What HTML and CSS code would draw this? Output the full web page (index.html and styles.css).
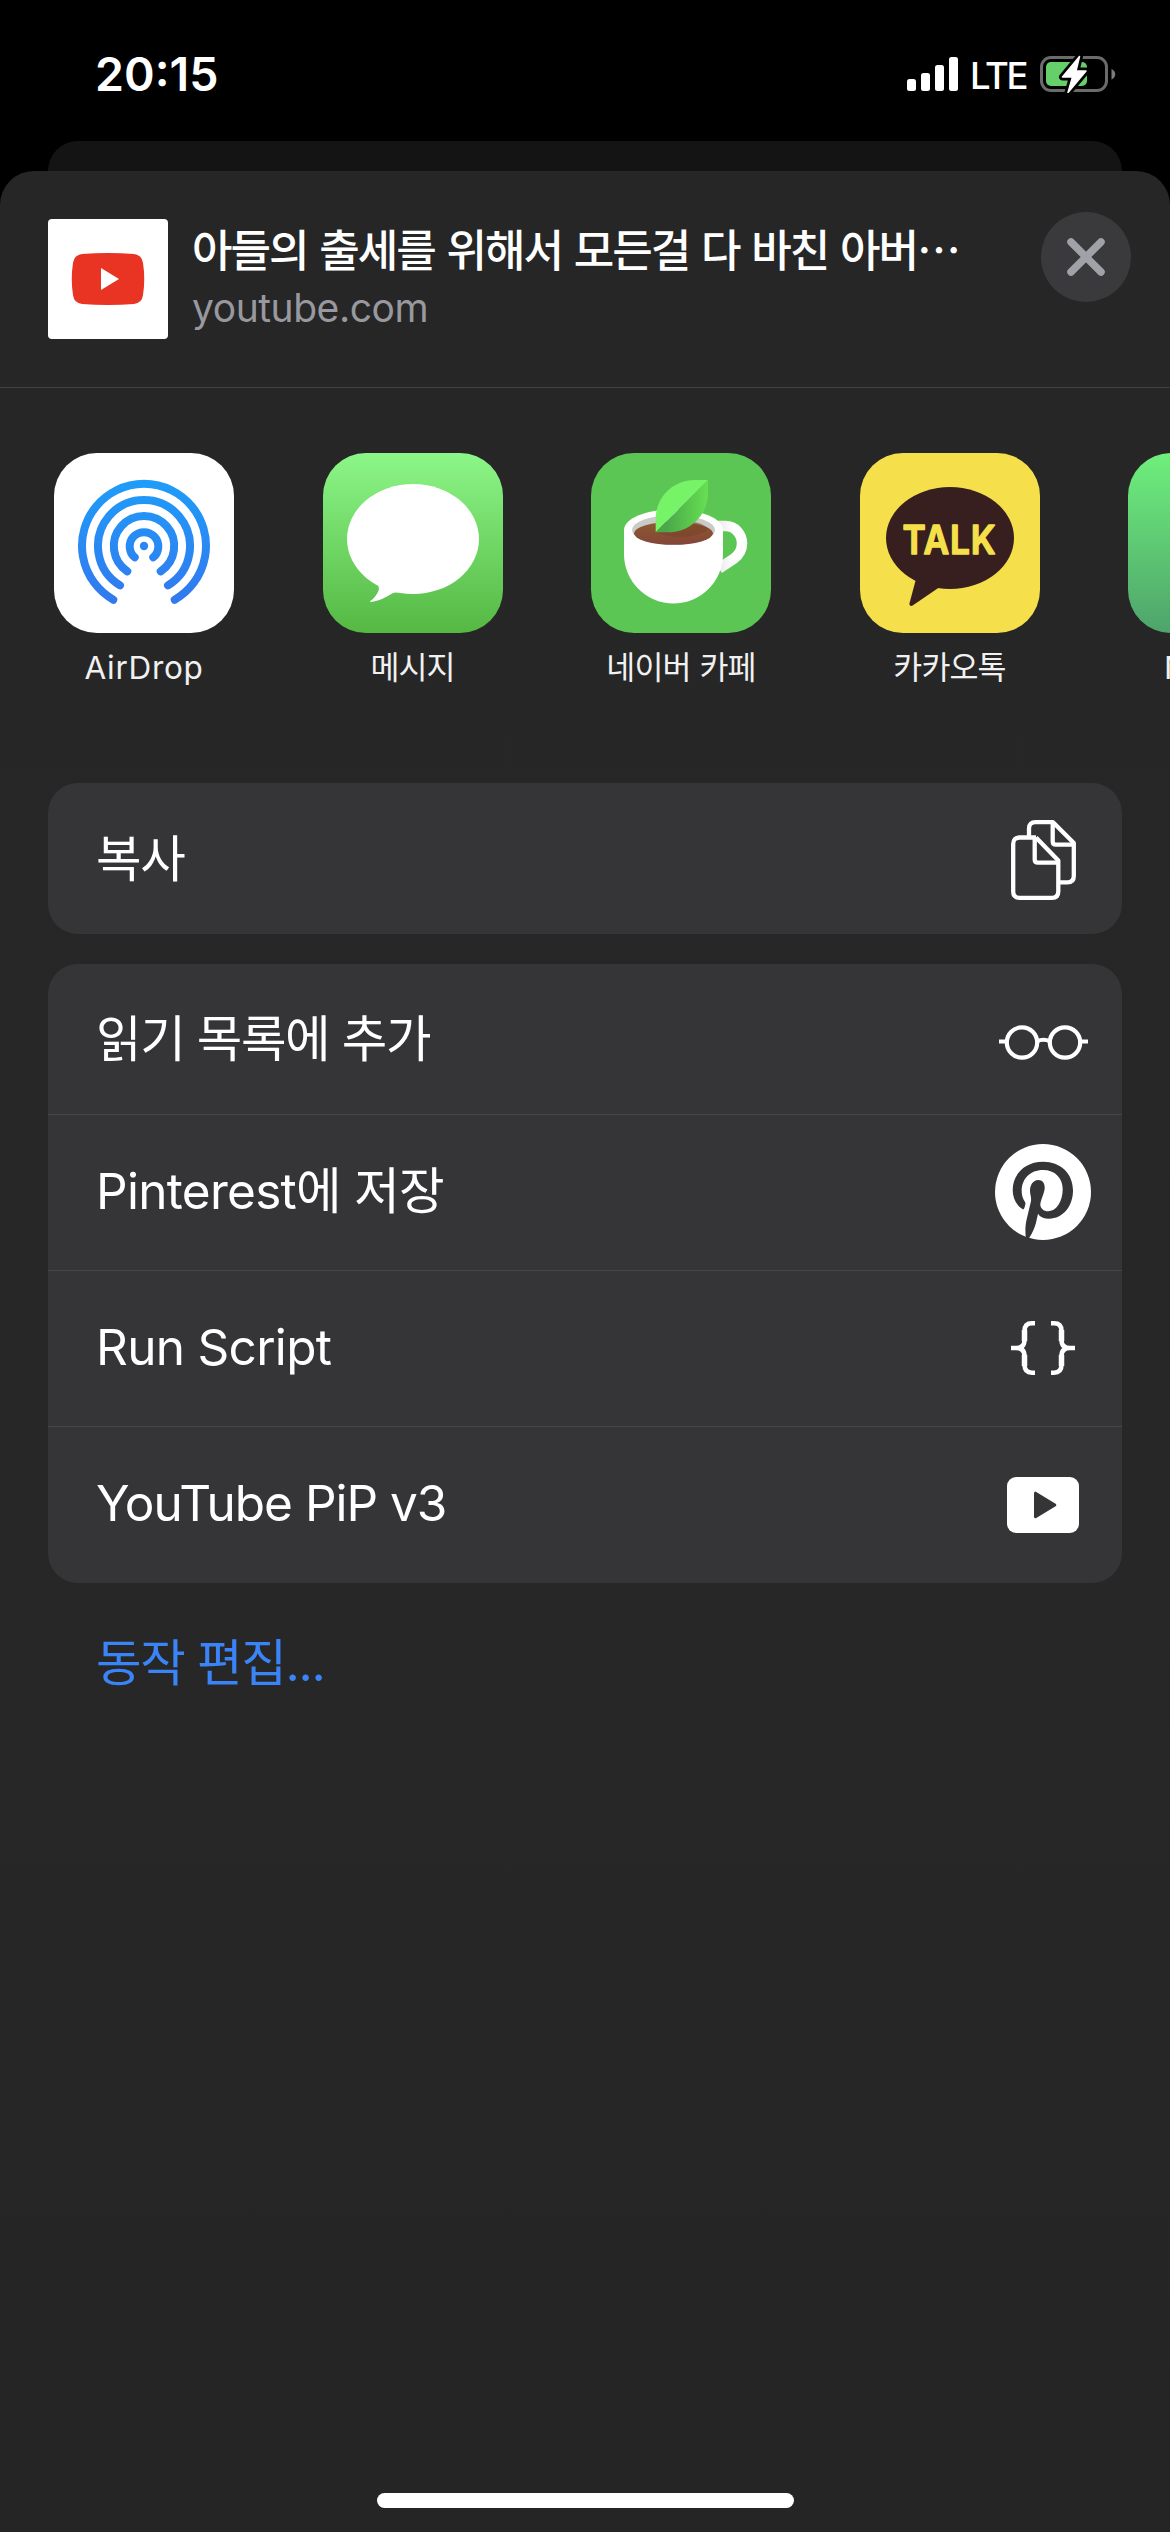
FILE: index.html
```html
<!DOCTYPE html>
<html lang="ko">
<head>
<meta charset="utf-8">
<title>공유</title>
<link rel="stylesheet" href="styles.css">
</head>
<body>
<div class="screen">
  <header class="status">
    <span class="time">20:15</span>
    <div class="status-right">
      <svg class="signal" width="51" height="34" viewBox="0 0 51 34" fill="#fff"><rect x="0" y="22" width="9" height="12" rx="2.5"/><rect x="14" y="16" width="9" height="18" rx="2.5"/><rect x="28" y="8" width="9" height="26" rx="2.5"/><rect x="42" y="0" width="9" height="34" rx="2.5"/></svg>
      <span class="network">LTE</span>
      <svg class="battery" width="76" height="38" viewBox="0 0 76 38"><rect x="1.5" y="2.5" width="65" height="33" rx="9.5" fill="none" stroke="#6b6b6b" stroke-width="3"/><rect x="6" y="7" width="41" height="24" rx="5" fill="#65d069"/><path d="M71.5 14c5 2 5 8.500 0 10.500z" fill="#7c7c7c"/><path d="M39.500 1.500L22.500 22h10L28 37.500 46 16H36z" fill="#fff" stroke="#000" stroke-width="7" stroke-linejoin="round"/><path d="M39.500 1.500L22.500 22h10L28 37.500 46 16H36z" fill="#fff" stroke="#fff" stroke-width="1.500" stroke-linejoin="round"/></svg>
    </div>
  </header>
  <div class="backcard"></div>
  <main class="sheet">
    <section class="preview">
      <svg class="thumb" width="120" height="120" viewBox="0 0 120 120"><rect width="120" height="120" rx="4" fill="#fff"/><path d="M34 35Q60 33 86 35Q94 36 95 44Q97.500 60 95 76Q94 84 86 85Q60 87 34 85Q26 84 25 76Q22.500 60 25 44Q26 36 34 35Z" fill="#e93323"/><path d="M53 49v22l18-11z" fill="#fff"/></svg>
      <div class="meta">
        <h1 class="title">아들의 출세를 위해서 모든걸 다 바친 아버⋯</h1>
        <p class="domain">youtube.com</p>
      </div>
      <button class="close" aria-label="닫기"><svg width="90" height="90" viewBox="0 0 90 90"><path d="M30 30l30 30M60 30L30 60" stroke="#a1a1a8" stroke-width="7.500" stroke-linecap="round"/></svg></button>
    </section>
    <section class="apps">
      <div class="app">
        <svg class="app-icon white" viewBox="0 0 180 180"><defs><linearGradient id="air" gradientUnits="userSpaceOnUse" x1="0" y1="27" x2="0" y2="150"><stop offset="0" stop-color="#1e9df9"/><stop offset="1" stop-color="#3378ee"/></linearGradient></defs><g fill="none" stroke="url(#air)" stroke-width="8" stroke-linecap="round"><path d="M59.300 146.700A62 62 0 1 1 120.700 146.700"/><path d="M66 132.300A46 46 0 1 1 114 132.300"/><path d="M73.300 118.300A30.200 30.200 0 1 1 106.700 118.300"/><path d="M80.700 104.300A14.300 14.300 0 1 1 99.300 104.300"/></g><circle cx="90" cy="93" r="4.200" fill="#2a88f2"/></svg>
        <span class="app-name">AirDrop</span>
      </div>
      <div class="app">
        <svg class="app-icon messages" viewBox="0 0 180 180"><ellipse cx="90" cy="86" rx="66" ry="55" fill="#fff"/><path d="M53 130Q59 135 52.500 143Q50 146.500 47 148.300Q47 149.500 51 148.500Q60 146.500 69 140.500Q71 139 76 139.500L80 125z" fill="#fff"/></svg>
        <span class="app-name ko">메시지</span>
      </div>
      <div class="app">
        <svg class="app-icon cafe" viewBox="0 0 180 180"><defs><linearGradient id="leaf" gradientUnits="userSpaceOnUse" x1="75" y1="0" x2="117" y2="0"><stop offset="0" stop-color="#4aa74a"/><stop offset="1" stop-color="#67e052"/></linearGradient><linearGradient id="coffee" x1="0" y1="0" x2="0" y2="1"><stop offset="0" stop-color="#8d5a2e"/><stop offset="1" stop-color="#84453a"/></linearGradient><linearGradient id="handle" gradientUnits="userSpaceOnUse" x1="129" y1="0" x2="143" y2="0"><stop offset="0" stop-color="#ececec"/><stop offset="1" stop-color="#fff"/></linearGradient></defs><path d="M127 73H134.500C144 73 151 81 151 90.500C151 98 148 102 142.500 106L128 115.500" fill="none" stroke="url(#handle)" stroke-width="10.500"/><path d="M33 77C33 65 56 56.500 82.500 56.500S132 65 132 77V101a49.500 49.500 0 0 1-99 0z" fill="#fff"/><ellipse cx="82.500" cy="77" rx="41.500" ry="15" fill="#cacaca"/><ellipse cx="82.500" cy="80.300" rx="39.500" ry="11.500" fill="url(#coffee)"/><path d="M64.700 79.300Q78 85 94 84Q111 82 118 76Q110 69 101 69L82 79z" fill="#7a4429" opacity=".6"/><path d="M64.700 79.300V66C64.700 44 82 27 104 27H117z" fill="#76f367"/><path d="M117 27V40C117 62 99 79.300 78 79.300H64.700z" fill="url(#leaf)"/></svg>
        <span class="app-name ko">네이버 카페</span>
      </div>
      <div class="app">
        <svg class="app-icon kakao" viewBox="0 0 180 180"><ellipse cx="90" cy="85" rx="64" ry="51" fill="#371f20"/><path d="M55.700 127L49.300 151Q50 154 53 152.300L79 134.500z" fill="#371f20"/><text class="talk" x="42.500" y="100.500" textLength="94" lengthAdjust="spacingAndGlyphs">TALK</text></svg>
        <span class="app-name ko">카카오톡</span>
      </div>
      <div class="app">
        <div class="app-icon partial"></div>
        <span class="app-name">NAVER</span>
      </div>
    </section>
    <section class="actions">
      <div class="group">
        <div class="row"><span class="label ko">복사</span>
          <div class="icon copy"><svg width="65" height="80" viewBox="0 0 65 80" fill="none" stroke="#fff" stroke-width="4.300" stroke-linejoin="round"><path d="M25 17.500H8.500Q2.200 17.500 2.200 24V71.500Q2.200 77.800 8.500 77.800H41Q47.300 77.800 47.300 71.500V40.500L25 17.500"/><path d="M23.700 18V39.500Q23.700 42.700 27 42.700H47"/><path d="M18 17V8.500Q18 2.200 24.500 2.200H42L62.800 23V56Q62.800 62.300 56.500 62.300H49"/><path d="M41.700 3V21.500Q41.700 24.700 45 24.700H62"/></svg></div></div>
      </div>
      <div class="group">
        <div class="row first"><span class="label ko">읽기 목록에 추가</span>
          <div class="icon glasses"><svg width="89" height="35" viewBox="0 0 89 35" fill="none" stroke="#fff" stroke-width="4.200"><circle cx="23" cy="17.500" r="15.200"/><circle cx="66" cy="17.500" r="15.200"/><path d="M38 16.500Q44.500 13 51 16.500M0 16.500H7M82 16.500H89"/></svg></div></div>
        <div class="row tall"><span class="label pinterest">Pinterest에 저장</span>
          <div class="icon"><svg width="96" height="96" viewBox="0 0 96 96"><circle cx="48" cy="48" r="48" fill="#fff"/><path d="M43.300 36C38 36 35 41 35 47C35 51 36.500 53 36 57L31.500 76C30 83 30.300 88 30.800 94L33.800 94.500C38 88 40 83 41 78.700L43 69.700C45 73 49 74.700 54 74.700C68 74.700 78 62 78 46.500C78 29 65 17.700 48.300 17.700C29 17.700 17.700 31 17.700 46C17.700 54 21.500 62 28 65.300C29.300 65.800 30 61.500 30.500 59.500C30.800 58 26.700 55 26.700 47C26.700 35 35 26 48 26C60 26 67.700 34 67.700 45C67.700 58 61 67.300 53 67.300C48 67.300 44.500 63.500 45.500 59C46.500 54 49.700 48 49.700 43.700C49.700 39 47.500 36 43.300 36Z" fill="#353537"/></svg></div></div>
        <div class="row tall"><span class="label script">Run Script</span>
          <div class="icon"><svg class="braces" width="64" height="54" viewBox="0 0 64 54" fill="none" stroke="#fff" stroke-width="4.500"><path d="M24 2.300H21Q13.500 2.300 13.500 10V19Q13.500 27 5 27H0H5Q13.500 27 13.500 35V44Q13.500 51.700 21 51.700H24"/><path d="M40 2.300H43Q50.500 2.300 50.500 10V19Q50.500 27 59 27H64H59Q50.500 27 50.500 35V44Q50.500 51.700 43 51.700H40"/><path d="M13.500 9V20M13.500 34V45M50.500 9V20M50.500 34V45" stroke-width="5.500"/></svg></div></div>
        <div class="row last"><span class="label pip">YouTube PiP v3</span>
          <div class="icon"><svg width="72" height="56" viewBox="0 0 72 56"><rect width="72" height="56" rx="9" fill="#fff"/><path d="M28.500 16.200v23.600L47.800 28z" fill="#353537" stroke="#353537" stroke-width="3" stroke-linejoin="round"/></svg></div></div>
      </div>
      <a class="edit">동작 편집...</a>
    </section>
    <div class="home"></div>
  </main>
</div>
</body>
</html>
```
FILE: styles.css
```css
* { box-sizing: border-box; }
body { margin: 0; background: #000; }
.screen {
  width: 1170px;
  height: 2532px;
  overflow: hidden;
  display: flex;
  flex-direction: column;
  background: #000;
  color: #fff;
  font-family: Inter, "Noto Sans CJK KR", sans-serif;
}
.status {
  height: 141px;
  flex: none;
  display: flex;
  justify-content: space-between;
  align-items: flex-start;
  padding: 55px 54px 0 95px;
}
.time { font-size: 46.500px; font-weight: 600; line-height: 38px; letter-spacing: 0; }
.status-right { display: flex; align-items: flex-start; }
.signal { margin-top: 2px; }
.network { font-size: 36.500px; font-weight: 500; line-height: 42px; width: 82px; padding-left: 12px; letter-spacing: -2.300px; }
.backcard { flex: none; height: 30px; margin: 0 48px; border-radius: 30px 30px 0 0; background: #141414; }
.sheet {
  flex: 1;
  display: flex;
  flex-direction: column;
  border-radius: 34px 34px 0 0;
  background: linear-gradient(#262626, #272727 60%, #252525);
  overflow: hidden;
}
.preview {
  height: 217px;
  flex: none;
  display: flex;
  align-items: flex-start;
  padding: 48px 39px 0 48px;
  border-bottom: 1px solid #404142;
}
.thumb { flex: none; }
.meta { flex: 1; padding-left: 24px; white-space: nowrap; }
.title { margin: -2px 0 0; font: 500 44px/62px "Noto Sans CJK KR", sans-serif; letter-spacing: -1.950px; word-spacing: 1.300px; }
.domain { margin: 1px 0 0; font-size: 39px; line-height: 56px; color: #98989f; letter-spacing: -.450px; }
.close { flex: none; width: 90px; height: 90px; padding: 0; margin-top: -7px; border: 0; border-radius: 50%; background: #3a3a3c; }
.close svg { display: block; }
.apps { flex: none; height: 395px; display: flex; gap: 88.500px; padding: 65px 0 0 54px; overflow: hidden; }
.app { flex: none; width: 180px; display: flex; flex-direction: column; align-items: center; }
.app-icon { width: 180px; height: 180px; border-radius: 43px; flex: none; }
.white { background: #fff; }
.messages { background: linear-gradient(#8cf688, #55b843); }
.cafe { background: #5bc653; }
.kakao { background: #f5e04c; }
.partial { background: linear-gradient(#6fef7c, #4ea46b); }
.talk { font: 600 40px Inter, sans-serif; letter-spacing: 1px; fill: #f5e04c; stroke: #f5e04c; stroke-width: 1.500px; stroke-linejoin: round; }
.app-name { font-size: 31.500px; line-height: 44px; margin-top: 13px; letter-spacing: .700px; color: #f1f1f1; white-space: nowrap; }
.app-name.ko { margin-top: 10px; font-family: "Noto Sans CJK KR", sans-serif; letter-spacing: -.900px; word-spacing: 1px; }
.actions { padding: 0 48px; flex: 1; }
.group { background: #353537; border-radius: 30px; margin-bottom: 30px; overflow: hidden; }
.row { height: 151px; display: flex; justify-content: space-between; align-items: center; padding: 0 31px 0 48px; }
.row.first { height: 150px; }
.row.tall { height: 156px; }
.row.last { height: 157px; }
.row + .row { box-shadow: inset 0 1px #464648; }
.label { font-size: 49.500px; line-height: 60px; letter-spacing: -.700px; white-space: nowrap; }
.label.ko { letter-spacing: -1.400px; }
.label.pinterest { letter-spacing: -.700px; padding-bottom: 3px; }
.label.script { padding-bottom: 3px; }
.label.pip { letter-spacing: -1px; padding-bottom: 4px; }
.icon { width: 96px; display: flex; justify-content: center; flex: none; }
.icon.copy { padding-top: 3px; }
.icon.glasses { padding-top: 7px; }
.edit { display: block; padding: 20px 48px; font-size: 49.500px; line-height: 60px; letter-spacing: -1.300px; color: #3a84f7; }
.home { width: 417px; height: 15px; border-radius: 8px; background: #fff; margin: 0 auto 24px; flex: none; }
```
